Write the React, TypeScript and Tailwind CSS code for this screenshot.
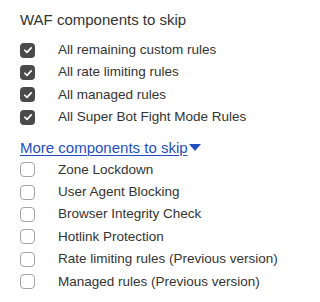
const enabled = [
  "All remaining custom rules",
  "All rate limiting rules",
  "All managed rules",
  "All Super Bot Fight Mode Rules",
];

const more = [
  "Zone Lockdown",
  "User Agent Blocking",
  "Browser Integrity Check",
  "Hotlink Protection",
  "Rate limiting rules (Previous version)",
  "Managed rules (Previous version)",
];

const Box = ({ checked }: { checked?: boolean }) =>
  checked ? (
    <span className="flex h-[15px] w-[15px] shrink-0 items-center justify-center rounded-[4px] bg-[#4a4a4a]">
      <svg viewBox="0 0 12 12" className="h-[10px] w-[10px]">
        <path d="M2.2 6.3 L4.8 8.8 L9.8 3.4" fill="none" stroke="#fff" strokeWidth="2" strokeLinecap="round" strokeLinejoin="round" />
      </svg>
    </span>
  ) : (
    <span className="h-[15px] w-[15px] shrink-0 rounded-[4px] border border-[#a3a3a3] bg-white" />
  );

const Row = ({ label, checked }: { label: string; checked?: boolean }) => (
  <label className="flex h-[22.4px] items-center gap-[23px]">
    <Box checked={checked} />
    <span className="text-[13.5px] leading-[22.4px] text-[#333]">{label}</span>
  </label>
);

export default function App() {
  return (
    <div className="h-[302px] w-[300px] bg-white px-5 pt-[9px]" style={{ fontFamily: '"Liberation Sans", Arial, sans-serif' }}>
      <h3 className="text-[15px] leading-[22px] text-[#333]">WAF components to skip</h3>
      <div className="mt-2">
        {enabled.map((l) => (
          <Row key={l} label={l} checked />
        ))}
      </div>
      <button className="mt-2 flex items-center text-[15px] leading-[22px] text-[#2350c0]">
        <span className="underline decoration-1 underline-offset-[2px]">More components to skip</span>
        <svg viewBox="0 0 12 8" className="ml-[1px] h-[8px] w-[12px]">
          <path d="M0 0 H12 L6 7 Z" fill="#2350c0" />
        </svg>
      </button>
      <div>
        {more.map((l) => (
          <Row key={l} label={l} />
        ))}
      </div>
    </div>
  );
}
